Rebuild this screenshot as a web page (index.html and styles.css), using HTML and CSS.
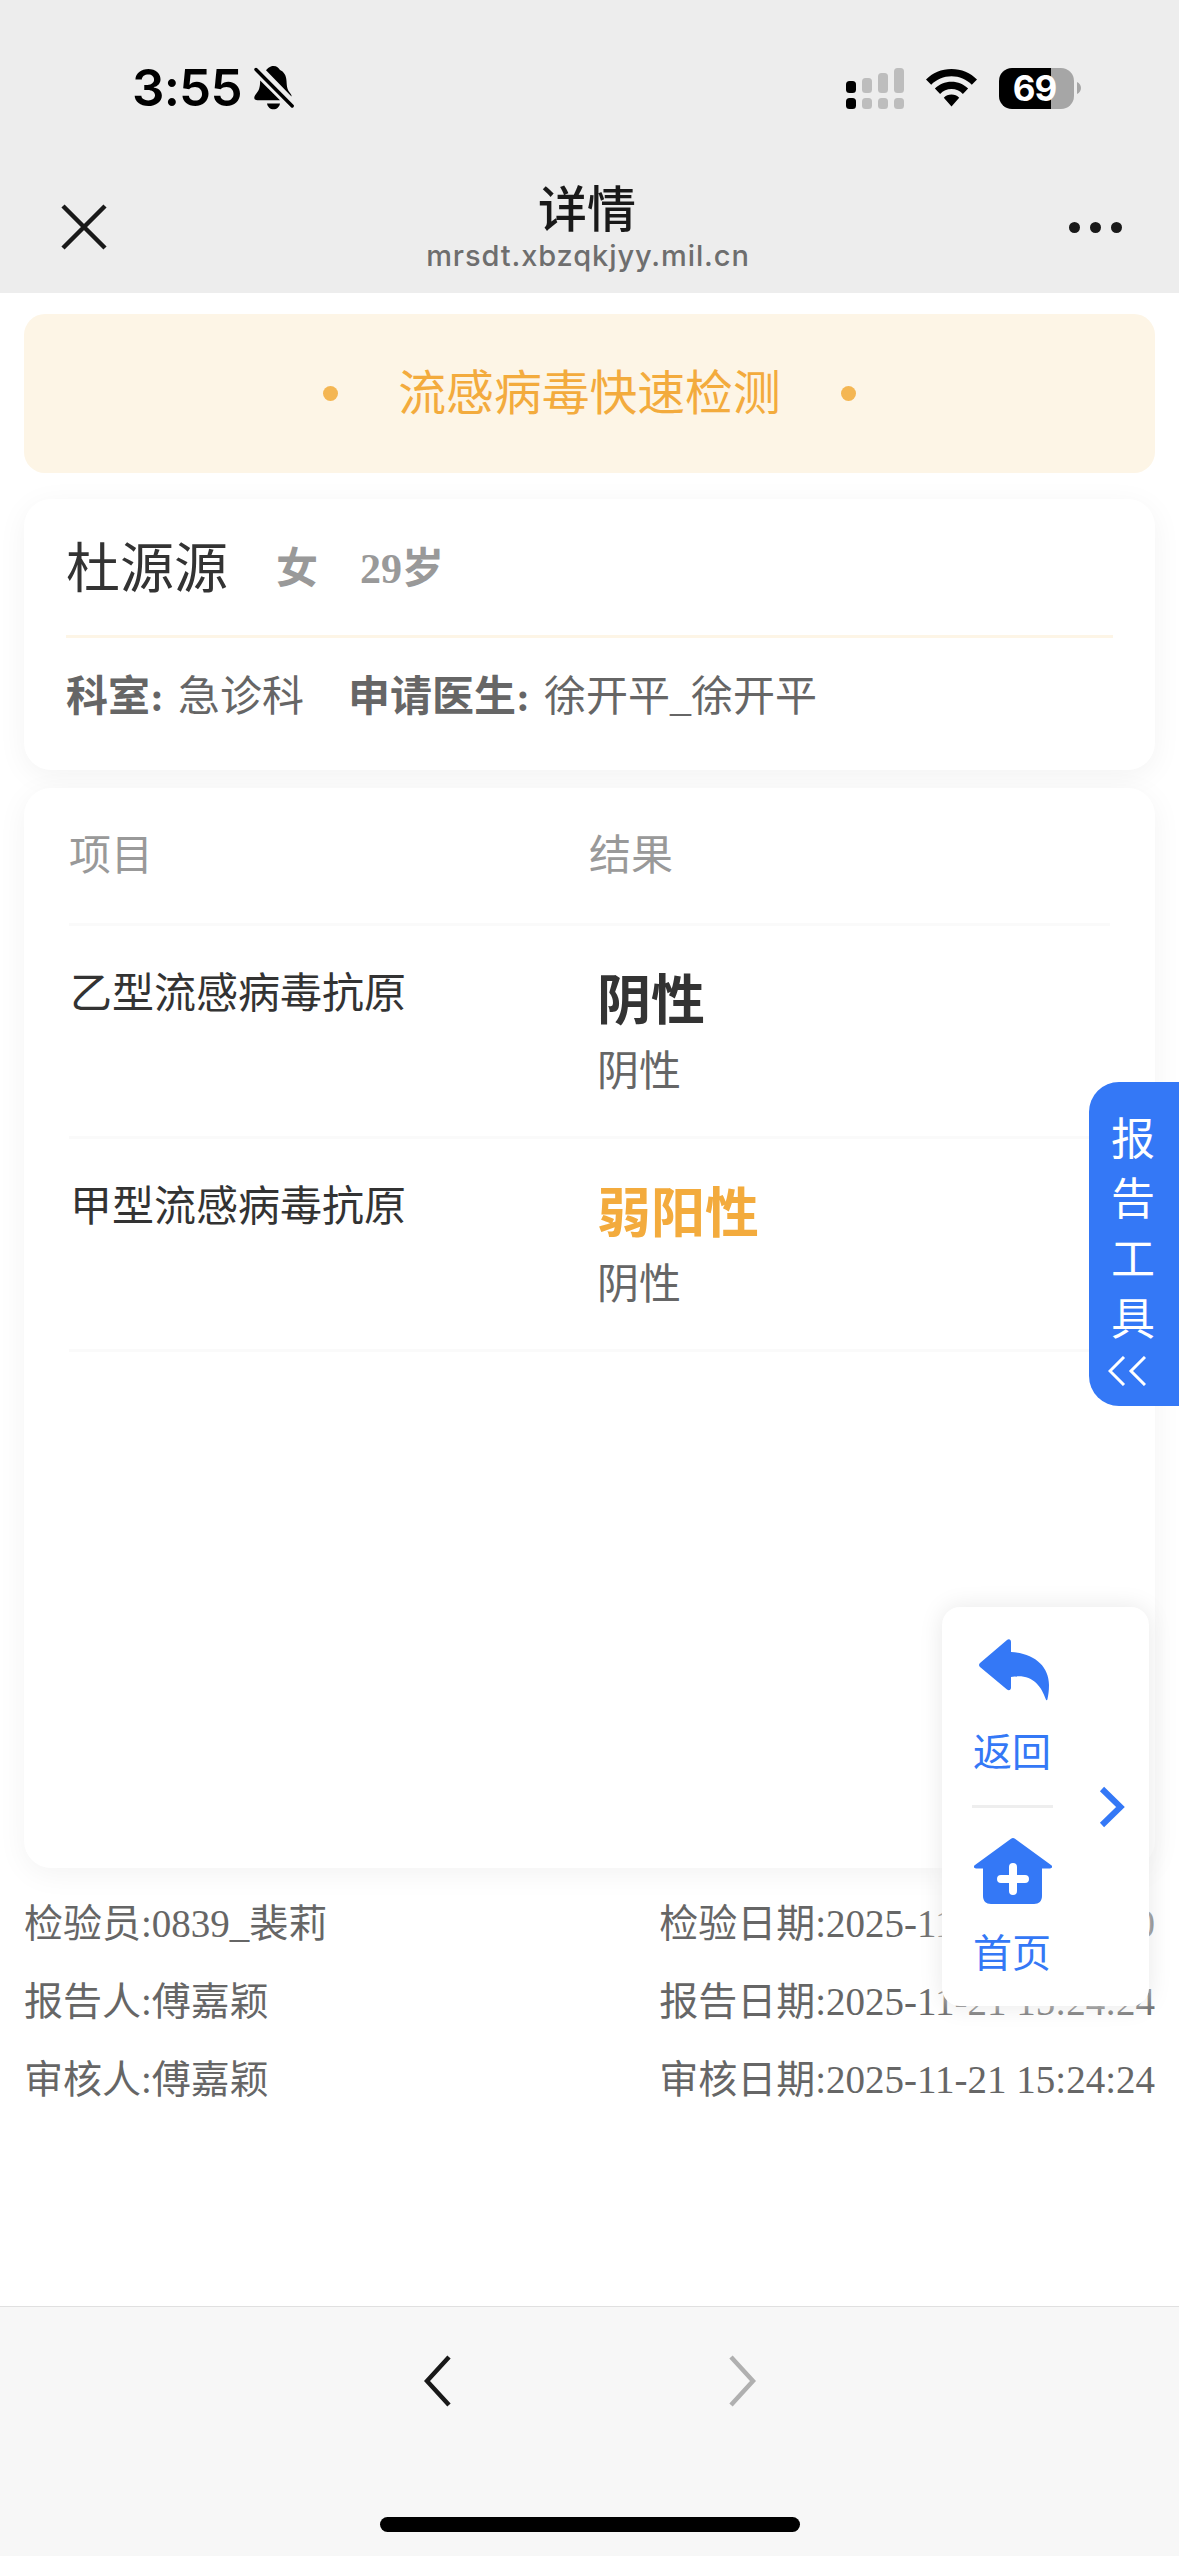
FILE: index.html
```html
<!DOCTYPE html>
<html lang="zh-CN">
<head>
<meta charset="utf-8">
<title>详情</title>
<link rel="stylesheet" href="styles.css">
</head>
<body>
<div class="screen">
  <header class="top">
    <div class="status">
      <span class="clock">3:55</span>
      <svg class="bell" viewBox="0 0 40 44" width="40" height="44"><path d="M19.500 0c-4 0-5.500 2.500-7.500 4.200L37.500 30.500c.3-1-.6-2.500-1.500-3.500-2.500-3-3.200-6-3.500-12-.3-6-2.700-9.300-6.500-11C24.500 2 23 0 19.500 0zM6.200 14.500 26 34.300H3.500C-.5 34.300-.5 31 2 28c3.200-3.800 4-6.500 4.200-13.500zM13 37.500h13c-.6 3.500-3.200 5.800-6.500 5.800S13.600 41 13 37.500z"/><path d="M2 3.500 38.200 40" stroke="#000" stroke-width="3.400" stroke-linecap="round"/></svg>
      <svg class="signal" viewBox="0 0 58 41" width="58" height="41"><g fill="#bdbdbd"><rect x="16" y="10" width="10" height="15" rx="3.500"/><rect x="32" y="5" width="10" height="20" rx="3.500"/><rect x="48" y="0" width="10" height="25" rx="3.500"/><rect x="16" y="30" width="10" height="11" rx="3.500"/><rect x="32" y="30" width="10" height="11" rx="3.500"/><rect x="48" y="30" width="10" height="11" rx="3.500"/></g><rect y="13" width="10" height="12" rx="3.500"/><rect y="30" width="10" height="11" rx="3.500"/></svg>
      <svg class="wifi" viewBox="0 0 51 38" width="51" height="38"><path d="M25.500 0C35.500 0 44.500 4 51 10.500l-5.200 5.300C40.500 10.500 33.300 7.300 25.500 7.300S10.500 10.500 5.200 15.800L0 10.500C6.500 4 15.500 0 25.500 0zM25.500 12.800c6.500 0 12.300 2.500 16.600 6.800l-5.200 5.300c-3-3-7-4.800-11.400-4.800s-8.400 1.800-11.400 4.800l-5.200-5.300c4.300-4.300 10.100-6.800 16.600-6.800zM25.500 25.500c3 0 5.700 1.200 7.700 3.200L25.500 37.500l-7.700-8.800c2-2 4.700-3.200 7.700-3.200z"/></svg>
      <div class="battery"><span>69</span></div>
      <svg class="nub" viewBox="0 0 4 12" width="4" height="12"><path fill="#a6a6a6" d="M0 0c2.500 1 4 3.500 4 6s-1.500 5-4 6z"/></svg>
    </div>
    <div class="nav">
      <svg class="close" viewBox="0 0 46 46" width="46" height="46"><path d="M2 2 44 44M44 2 2 44" stroke="#191919" stroke-width="4.500"/></svg>
      <div class="heading">
        <h1>详情</h1>
        <p>mrsdt.xbzqkjyy.mil.cn</p>
      </div>
      <div class="more"><i></i><i></i><i></i></div>
    </div>
  </header>

  <main>
    <section class="banner"><i></i><h2>流感病毒快速检测</h2><i></i></section>

    <section class="card patient">
      <div class="who"><span class="name">杜源源</span><b class="sex">女</b><b>29岁</b></div>
      <div class="dept"><b>科室<em>:</em></b><span>急诊科</span><b class="next">申请医生<em>:</em></b><span>徐开平_徐开平</span></div>
    </section>

    <section class="card results">
      <div class="row head"><span>项目</span><span>结果</span></div>
      <div class="row"><span>乙型流感病毒抗原</span><div class="value"><strong>阴性</strong><small>阴性</small></div></div>
      <div class="row"><span>甲型流感病毒抗原</span><div class="value warn"><strong>弱阳性</strong><small>阴性</small></div></div>
    </section>

    <section class="sign">
      <div><span>检验员:0839_裴莉</span><span>检验日期:2025-11-21 15:20:30</span></div>
      <div><span>报告人:傅嘉颖</span><span>报告日期:2025-11-21 15:24:24</span></div>
      <div><span>审核人:傅嘉颖</span><span>审核日期:2025-11-21 15:24:24</span></div>
    </section>
  </main>

  <footer class="toolbar">
    <div class="arrows">
      <svg viewBox="0 0 28 52" width="28" height="52"><path d="M25 2 3 26 25 50" fill="none" stroke="#191919" stroke-width="4.500"/></svg>
      <svg viewBox="0 0 28 52" width="28" height="52"><path d="M3 2 25 26 3 50" fill="none" stroke="#b0b0b0" stroke-width="4.500"/></svg>
    </div>
    <div class="home"></div>
  </footer>

  <aside class="tools">
    <span>报</span><span>告</span><span>工</span><span>具</span>
    <svg viewBox="0 0 38 30" width="38" height="30"><path d="M16 1 2 15 16 29M37 1 23 15 37 29" fill="none" stroke="#fff" stroke-width="3"/></svg>
  </aside>

  <aside class="float">
    <div class="links">
      <a><svg viewBox="0 0 70 62" width="70" height="62"><path fill="#3478f6" d="M1 24 28 1c2-1.500 4-.5 4 2v10C55 14 70 27 70 46c0 6-.7 10-1.500 14-.4 1.700-1.300 1.700-1.800 0C62 46 52 34 32 38v10.500c0 2.500-2 3.500-4 2L1 28c-1.300-1.200-1.300-2.800 0-4z"/></svg>返回</a>
      <hr>
      <a class="main-page"><svg viewBox="0 0 78 66" width="78" height="66"><path fill="#3478f6" d="M37 .8c1.300-1 2.700-1 4 0L77 27c2 1.500 1 3.500-1 3.500h-8V58c0 5-3 8-8 8H17c-5 0-8-3-8-8V30.500H2c-2 0-3-2-1-3.500z"/><path d="M39 29v24M27 41h24" stroke="#fff" stroke-width="8" stroke-linecap="round"/></svg>首页</a>
    </div>
    <svg class="fold" viewBox="0 0 26 42" width="26" height="42"><path d="M3 3 21.500 21 3 39" fill="none" stroke="#3478f6" stroke-width="6"/></svg>
  </aside>
</div>
</body>
</html>
```
FILE: styles.css
```css
* { box-sizing: border-box; margin: 0; padding: 0; }
body { background: #fff; font-family: "Liberation Serif", "Noto Sans CJK SC", sans-serif; }
svg { display: block; flex: none; }
i, em { font-style: normal; }

.screen { position: relative; width: 1179px; height: 2556px; display: flex; flex-direction: column; overflow: hidden; background: #fff; }

.top { height: 293px; background: #ededed; font-family: Inter, "Noto Sans CJK SC", sans-serif; }
.status { height: 176px; padding: 0 98px 0 132px; display: flex; align-items: center; }
.clock { width: 122px; font-size: 51px; font-weight: 600; line-height: 60px; letter-spacing: -0.800px; }
.signal { margin-left: auto; }
.wifi { margin-left: 22px; }
.battery { width: 75px; height: 41px; padding-right: 4px; margin-left: 22px; border-radius: 13px; background: linear-gradient(90deg, #000 52px, #a6a6a6 52px); color: #fff; font-size: 35px; font-weight: 700; line-height: 41px; text-align: center; letter-spacing: -1px; }
.nub { margin-left: 3px; }
.nav { height: 117px; padding: 0 57px 0 61px; display: flex; align-items: flex-start; justify-content: space-between; }
.close { margin-top: 28px; }
.heading { text-align: center; }
.heading h1 { font-size: 49px; font-weight: 500; line-height: 60px; color: #191919; margin: 4px 2px 0 0; }
.heading p { font-size: 29px; font-weight: 500; line-height: 36px; margin-top: -2px; color: #6e6e6e; letter-spacing: 0.900px; }
.more { display: flex; gap: 10px; margin-top: 46px; }
.more i { width: 11px; height: 11px; border-radius: 50%; background: #191919; }

main { flex: 1; padding: 21px 24px 0; }
.banner { height: 159px; border-radius: 21px; background: #fdf5e6; display: flex; align-items: center; justify-content: center; gap: 60px; }
.banner h2 { font-size: 47.800px; font-weight: 400; line-height: 60px; color: #f3ab3d; }
.banner i { width: 15px; height: 15px; border-radius: 50%; background: #f4b653; }

.card { border-radius: 27px; background: #fff; box-shadow: 0 6px 30px rgba(0, 0, 0, .05); }
.patient { height: 271px; margin-top: 26px; padding: 0 42px; color: #666; font-size: 42px; }
.who { height: 139px; padding-bottom: 6px; border-bottom: 3px solid #fdf5e6; display: flex; align-items: center; color: #999; }
.name { font-size: 54px; color: #333; }
.sex { margin: 0 42px 0 48px; }
.dept { height: 109px; display: flex; align-items: center; }
.dept em { display: inline-block; width: 28px; }
.next { margin-left: 44px; }

.results { height: 1080px; margin-top: 18px; padding: 0 45px; font-size: 42px; color: #333; }
.row { height: 213px; padding: 38px 0 0 1px; border-bottom: 3px solid #fafafa; display: grid; grid-template-columns: 527px 1fr; line-height: 60px; }
.head { height: 138px; padding: 38px 0 0; grid-template-columns: 520px 1fr; color: #999; }
.value { display: flex; flex-direction: column; }
.value strong { font-size: 54px; line-height: 76px; }
.value small { font-size: 42px; line-height: 64px; color: #666; }
.warn strong { color: #f3ab3d; }

.sign { margin-top: 17px; font-size: 39px; line-height: 78px; color: #666; }
.sign div { display: flex; justify-content: space-between; }

.toolbar { height: 250px; border-top: 1px solid #e0e0e0; background: #f7f7f7; display: flex; flex-direction: column; align-items: center; justify-content: space-between; padding: 48px 0 24px; }
.arrows { width: 332px; display: flex; justify-content: space-between; }
.home { width: 420px; height: 15px; border-radius: 8px; background: #000; }

.tools { position: absolute; right: 0; top: 1082px; width: 90px; height: 324px; padding: 29px 0 0 22px; border-radius: 30px 0 0 30px; background: #3478f6; color: #fff; font-size: 44px; line-height: 60px; display: flex; flex-direction: column; }
.tools svg { margin: 5px 0 0 -3px; }

.float { position: absolute; left: 942px; top: 1607px; width: 207px; height: 399px; padding: 32px 0 0 30px; border-radius: 18px; background: #fff; box-shadow: 0 0 24px #e8e8e8; display: flex; align-items: flex-start; color: #3478f6; font-size: 39px; }
.links { width: 81px; }
.links a { width: 80px; display: flex; flex-direction: column; align-items: center; line-height: 60px; gap: 22px; }
.links a svg { margin-left: 3px; }
.links .main-page { gap: 20px; }
.links .main-page svg { margin-left: 2px; }
.links hr { border: 0; height: 3px; background: #eee; margin: 22px 0 30px; }
.fold { margin: 147px 0 0 46px; }
```
